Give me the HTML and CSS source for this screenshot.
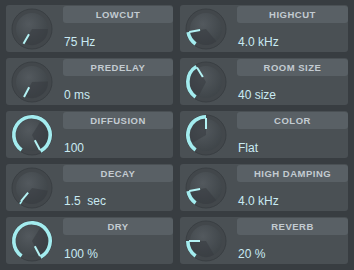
FILE: index.html
```html
<!DOCTYPE html>
<html lang="en">
<head>
    <meta charset="UTF-8">
    <meta name="viewport" content="width=device-width, initial-scale=1.0">
    <title>Reverb</title>
    <link rel="stylesheet" href="styles.css">
</head>
<body>

    <!-- Reverb parameters -->
    <div class="rack">
        <div class="param">
            <div class="knob" data-angle="-150"></div>
            <div class="info">
                <div class="label">LOWCUT</div>
                <div class="value">75 Hz</div>
            </div>
        </div>
        <div class="param">
            <div class="knob" data-angle="-100"></div>
            <div class="info">
                <div class="label">HIGHCUT</div>
                <div class="value">4.0 kHz</div>
            </div>
        </div>
        <div class="param">
            <div class="knob" data-angle="-152"></div>
            <div class="info">
                <div class="label">PREDELAY</div>
                <div class="value">0 ms</div>
            </div>
        </div>
        <div class="param">
            <div class="knob" data-angle="-32"></div>
            <div class="info">
                <div class="label">ROOM SIZE</div>
                <div class="value">40 size</div>
            </div>
        </div>
        <div class="param">
            <div class="knob" data-angle="152"></div>
            <div class="info">
                <div class="label">DIFFUSION</div>
                <div class="value">100</div>
            </div>
        </div>
        <div class="param">
            <div class="knob" data-angle="0"></div>
            <div class="info">
                <div class="label">COLOR</div>
                <div class="value">Flat</div>
            </div>
        </div>
        <div class="param">
            <div class="knob" data-angle="-140"></div>
            <div class="info">
                <div class="label">DECAY</div>
                <div class="value">1.5&nbsp; sec</div>
            </div>
        </div>
        <div class="param">
            <div class="knob" data-angle="-100"></div>
            <div class="info">
                <div class="label">HIGH DAMPING</div>
                <div class="value">4.0 kHz</div>
            </div>
        </div>
        <div class="param">
            <div class="knob" data-angle="152"></div>
            <div class="info">
                <div class="label">DRY</div>
                <div class="value">100 %</div>
            </div>
        </div>
        <div class="param">
            <div class="knob" data-angle="-90"></div>
            <div class="info">
                <div class="label">REVERB</div>
                <div class="value">20 %</div>
            </div>
        </div>
    </div>

    <script>
        const START = -145;

        // point on a circle, angle in degrees from 12 o'clock
        function pt(r, deg) {
            let a = (deg - 90) * Math.PI / 180;
            return [(22 + r * Math.cos(a)).toFixed(2), (22 + r * Math.sin(a)).toFixed(2)];
        }

        function drawKnob(el) {
            let angle = parseFloat(el.dataset.angle);
            let arc = '';
            if (angle > START) {
                let s = pt(18.2, START);
                let e = pt(18.2, angle);
                let large = angle - START > 180 ? 1 : 0;
                arc = `<path class="arc" d="M${s[0]} ${s[1]} A18.2 18.2 0 ${large} 1 ${e[0]} ${e[1]}"/>`;
            }
            let p1 = pt(6, angle);
            let p2 = pt(17, angle);
            // darker shading sector behind the pointer
            let d1 = pt(16, angle - 120);
            let d2 = pt(16, angle);
            el.innerHTML = `
                <svg width="44" height="44" viewBox="0 0 44 44">
                    <defs>
                        <radialGradient id="g" cx="40%" cy="35%" r="70%">
                            <stop offset="0" stop-color="#53595e"/>
                            <stop offset="1" stop-color="#3e4448"/>
                        </radialGradient>
                    </defs>
                    <circle class="ring" cx="22" cy="22" r="20"/>
                    <circle cx="22" cy="22" r="16" fill="url(#g)"/>
                    <path class="shade" d="M22 22 L${d1[0]} ${d1[1]} A16 16 0 0 1 ${d2[0]} ${d2[1]} Z"/>
                    ${arc}
                    <line class="pointer" x1="${p1[0]}" y1="${p1[1]}" x2="${p2[0]}" y2="${p2[1]}"/>
                </svg>`;
        }

        document.querySelectorAll('.knob').forEach(drawKnob);
    </script>

</body>
</html>
```

FILE: styles.css
```css
/* Page */
body {
    margin: 0;
    background-color: #383d41;
    font-family: 'Liberation Sans', Arial, sans-serif;
}

/* Grid of parameters */
.rack {
    display: grid;
    grid-template-columns: 167px 168px;
    grid-auto-rows: 47px;
    column-gap: 7px;
    row-gap: 6px;
    padding: 5px 6px;
}

.param {
    display: flex;
    align-items: flex-start;
    background-color: #4a5054;
    border-radius: 3px;
}

/* Knob */
.knob {
    width: 44px;
    height: 44px;
    margin: 2px 0 0 4px;
}

.knob svg {
    display: block;
}

.ring {
    fill: #42474b;
    stroke: #3a3f43;
    stroke-width: 1;
}

.shade {
    fill: #363b3f;
    opacity: 0.55;
}

.arc {
    fill: none;
    stroke: #a3ecef;
    stroke-width: 3.6;
}

.pointer {
    stroke: #b4f2f4;
    stroke-width: 2;
}

/* Label and value */
.info {
    flex: 1;
    margin-left: 9px;
}

.label {
    height: 17px;
    margin-top: 1px;
    line-height: 17px;
    background-color: #596065;
    border-radius: 3px;
    text-align: center;
    color: #c3cbd1;
    font-size: 9.5px;
    font-weight: bold;
    letter-spacing: 0.5px;
}

.value {
    margin-top: 12px;
    padding-left: 1px;
    line-height: 14px;
    color: #c9eaf2;
    font-size: 12px;
}
```
